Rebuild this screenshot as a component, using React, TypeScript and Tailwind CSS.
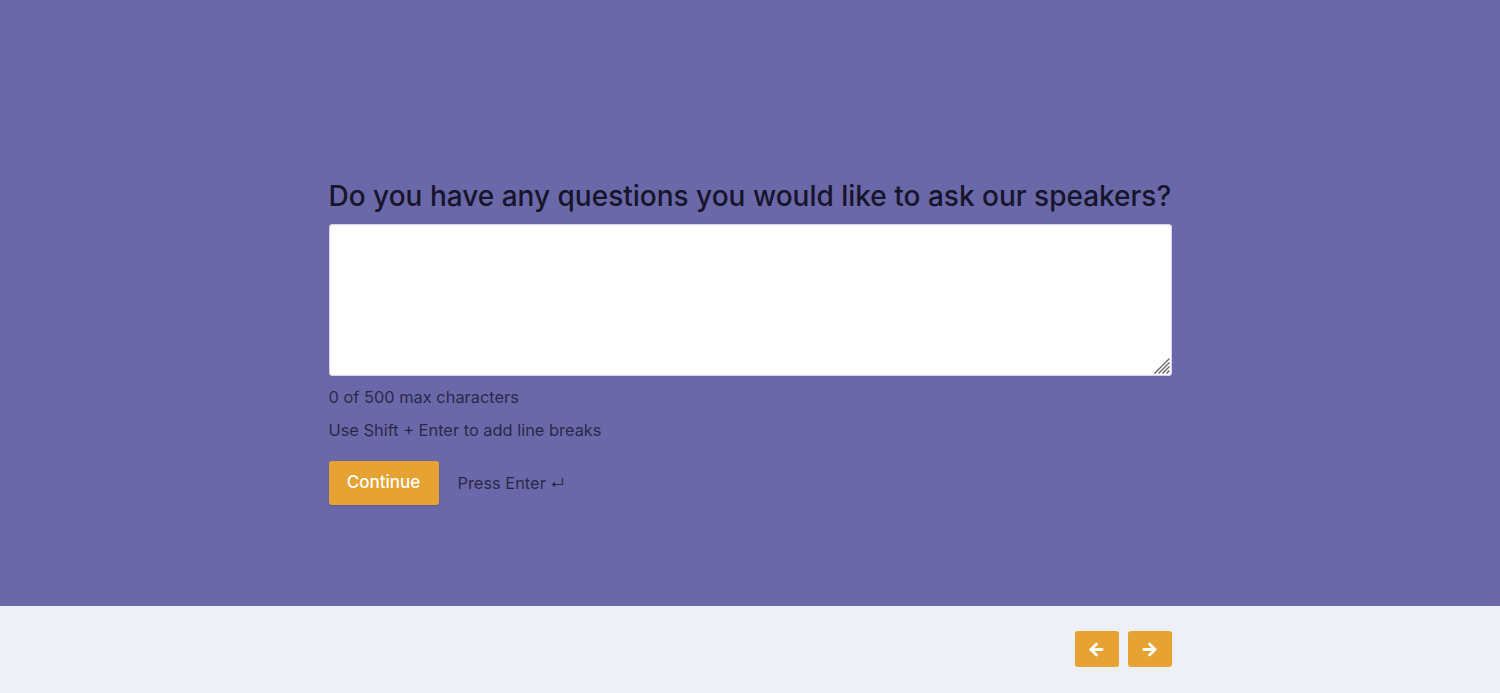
import { ArrowLeft, ArrowRight } from 'lucide-react';

function ResizeGrip() {
  return (
    <svg
      width="18"
      height="18"
      viewBox="0 0 18 18"
      className="absolute right-[2px] bottom-[2px] pointer-events-none"
    >
      <g stroke="#6b6b6b" strokeWidth="1.3" strokeLinecap="square">
        <line x1="3" y1="17" x2="17" y2="3" />
        <line x1="7" y1="17" x2="17" y2="7" />
        <line x1="11" y1="17" x2="17" y2="11" />
        <line x1="15" y1="17" x2="17" y2="15" />
      </g>
    </svg>
  );
}

export default function App() {
  return (
    <div className="min-h-[693px] flex flex-col font-['Inter',sans-serif]">
      {/* Question area */}
      <div className="h-[606px] bg-[#6a68a8] flex justify-center">
        <div className="w-[843px] pt-[177px]">
          <h1 className="text-[28px] leading-[38px] text-[#16152a] font-medium whitespace-nowrap">
            Do you have any questions you would like to ask our speakers?
          </h1>
          <div className="relative mt-[9px]">
            <textarea className="block w-full h-[152px] bg-white rounded-[3px] border border-[#d5d4e6] outline-none p-3 text-base resize-none" />
            <ResizeGrip />
          </div>
          <p className="mt-[10px] text-[16.4px] leading-[22px] text-[#2a2848]">0 of 500 max characters</p>
          <p className="mt-[11px] text-[16.4px] leading-[22px] text-[#2a2848]">Use Shift + Enter to add line breaks</p>
          <div className="mt-[20px] flex items-center gap-[19px]">
            <button className="w-[110px] h-[44px] bg-[#e6a233] rounded-[3px] text-white text-[17px] font-medium shadow-sm">
              Continue
            </button>
            <span className="text-[16.4px] text-[#2a2848]">
              Press Enter <span className="text-[14px]">↵</span>
            </span>
          </div>
        </div>
      </div>

      {/* Footer nav */}
      <div className="h-[87px] bg-[#efeff7] flex justify-center">
        <div className="w-[843px] flex justify-end items-start pt-[25px] gap-[9px]">
          <button className="w-[44px] h-[36px] bg-[#e6a233] rounded-[3px] flex items-center justify-center text-white">
            <ArrowLeft size={19} strokeWidth={3.5} />
          </button>
          <button className="w-[44px] h-[36px] bg-[#e6a233] rounded-[3px] flex items-center justify-center text-white">
            <ArrowRight size={19} strokeWidth={3.5} />
          </button>
        </div>
      </div>
    </div>
  );
}
